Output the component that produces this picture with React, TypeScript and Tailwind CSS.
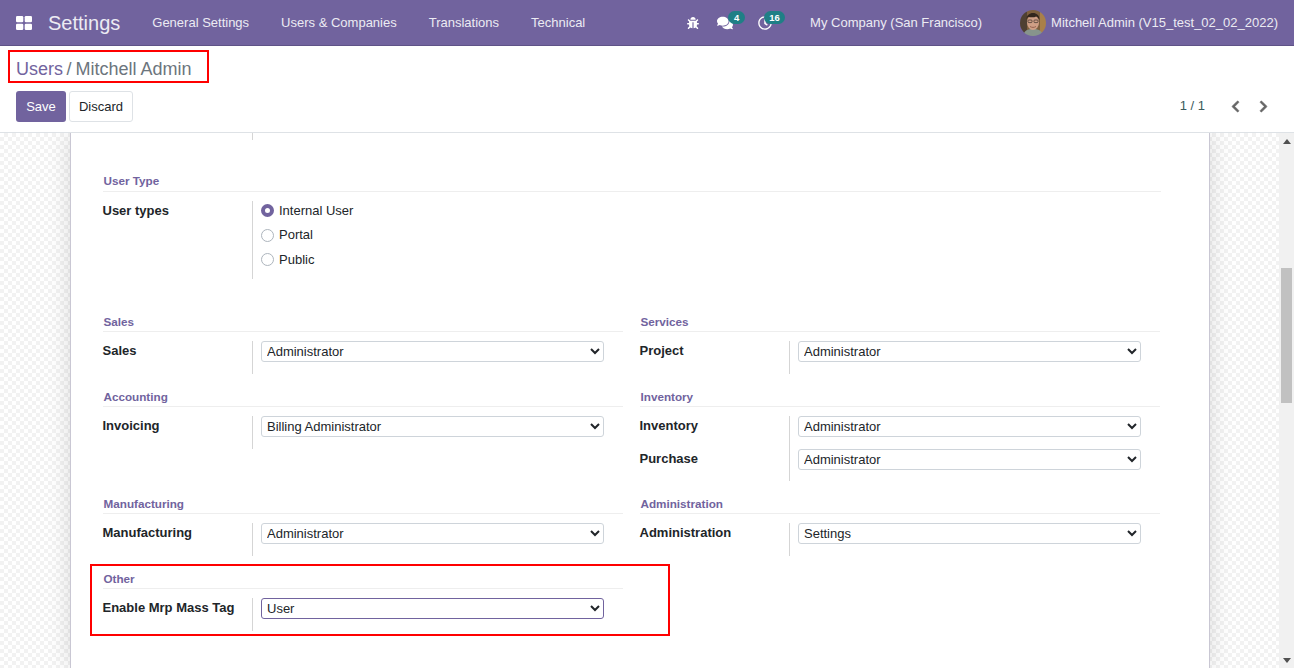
import React from "react";
import { FaBug, FaComments, FaRegClock, FaChevronLeft, FaChevronRight } from "react-icons/fa";

const font = "font-['Liberation_Sans',_Arial,_sans-serif]";

function Avatar() {
  return (
    <svg width="26" height="26" viewBox="0 0 26 26" className="rounded-full shrink-0 block">
      <defs>
        <filter id="soft">
          <feGaussianBlur stdDeviation="0.4" />
        </filter>
      </defs>
      <g filter="url(#soft)">
        <rect width="26" height="26" fill="#7d5f3e" />
        <rect x="0" y="0" width="7" height="26" fill="#4f3f30" />
        <rect x="20" y="0" width="6" height="26" fill="#a9804a" />
        <path d="M3 26c1-6 5-7 10-7s9 1 10 7z" fill="#87948c" />
        <ellipse cx="13" cy="12.500" rx="6" ry="7.500" fill="#cf9f86" />
        <path d="M6.500 10c0-5 3-7 6.500-7s6.500 2 6.500 7c-1-2-2-3-3-3.500-2 1-6 1-8 .5-1 .5-2 1.500-2 3z" fill="#33261f" />
        <rect x="8" y="10" width="4" height="2.600" rx="0.800" fill="none" stroke="#3a2f2a" strokeWidth="0.700" />
        <rect x="14" y="10" width="4" height="2.600" rx="0.800" fill="none" stroke="#3a2f2a" strokeWidth="0.700" />
        <path d="M10 16.500c2 1.200 4 1.200 6 0" fill="none" stroke="#8e5a4a" strokeWidth="0.900" />
      </g>
    </svg>
  );
}

function AppsIcon() {
  return (
    <svg width="16" height="14" viewBox="0 0 16 14" fill="#fff" className="shrink-0">
      <rect x="0" y="0" width="7.300" height="6.300" rx="1.300" />
      <rect x="8.700" y="0" width="7.300" height="6.300" rx="1.300" />
      <rect x="0" y="7.700" width="7.300" height="6.300" rx="1.300" />
      <rect x="8.700" y="7.700" width="7.300" height="6.300" rx="1.300" />
    </svg>
  );
}

function Navbar() {
  return (
    <div className="flex items-center h-[46px] shrink-0 bg-[#71639e] border-b border-[#5f5387] pl-4 pr-4 text-[13px] text-[#ecebf3]">
      <AppsIcon />
      <span className="ml-4 text-[20px] text-[#ecebf3]">Settings</span>
      <div className="flex ml-8 gap-8">
        <span>General Settings</span>
        <span>Users &amp; Companies</span>
        <span>Translations</span>
        <span>Technical</span>
      </div>
      <div className="flex items-center ml-auto">
        <FaBug size={12} className="block text-white" />
        <div className="relative ml-[18px]">
          <FaComments size={16} className="block text-white" />
          <span className="absolute left-[11px] -top-[4px] h-[13px] w-[17px] rounded-full bg-[#1f7f86] text-center text-[9.500px] leading-[13px] font-bold text-white">4</span>
        </div>
        <div className="relative ml-[25px]">
          <FaRegClock size={14} className="block text-white" />
          <span className="absolute left-[6px] -top-[5px] h-[13px] w-[21px] rounded-full bg-[#1f7f86] text-center text-[9.500px] leading-[13px] font-bold text-white">16</span>
        </div>
        <span className="ml-[38px]">My Company (San Francisco)</span>
        <span className="ml-[38px]"><Avatar /></span>
        <span className="ml-[5px]">Mitchell Admin (V15_test_02_02_2022)</span>
      </div>
    </div>
  );
}

function ControlPanel() {
  return (
    <div className="shrink-0 h-[87px] bg-white border-b border-[#dee2e6] px-4 pt-[11px]">
      <div className="flex items-baseline text-[18px] leading-[24px] h-[34px]">
        <span className="text-[#71639e]">Users</span>
        <span className="text-[#6c757d] ml-[3.500px] mr-[4px]">/</span>
        <span className="text-[#6c757d]">Mitchell Admin</span>
      </div>
      <div className="flex items-center text-[13px]">
        <button className="h-[31px] w-[50px] rounded-[3px] bg-[#71639e] text-white">Save</button>
        <button className="ml-[3px] h-[31px] w-[64px] rounded-[3px] border border-[#dee2e6] bg-white text-[#212529]">Discard</button>
        <span className="ml-auto -mt-[2px] text-[#3c5a5c]">1 / 1</span>
        <FaChevronLeft size={13} stroke="currentColor" strokeWidth={24} className="ml-[24px] -mt-px text-[#666666]" />
        <FaChevronRight size={13} stroke="currentColor" strokeWidth={24} className="ml-[15px] mr-[8px] -mt-px text-[#666666]" />
      </div>
    </div>
  );
}

function GroupTitle({ children, raised }: { children: React.ReactNode; raised?: boolean }) {
  return (
    <div
      className={
        raised
          ? "h-[20px] pl-[0.500px] border-b border-[#eeeeee] text-[11.700px] leading-[18px] font-bold text-[#71639e]"
          : "h-[20px] pl-[0.500px] border-b border-[#eeeeee] text-[11.700px] leading-[20px] font-bold text-[#71639e]"
      }
    >
      {children}
    </div>
  );
}

function FieldLabel({ children }: { children: React.ReactNode }) {
  return (
    <div className="w-[149.500px] -ml-[0.500px] shrink-0 text-[13px] leading-[19px] font-bold text-[#212529]">
      {children}
    </div>
  );
}

function SelectRow({ label, value, focused, short }: { label: string; value: string; focused?: boolean; short?: boolean }) {
  return (
    <div className={short ? "flex h-[32px]" : "flex h-[33px]"}>
      <FieldLabel>{label}</FieldLabel>
      <div className="border-l border-[#d5d5d5] pl-2">
        <select
          defaultValue={value}
          className={
            focused
              ? "block h-[21px] w-[343px] rounded-[3px] border border-[#71639e] bg-white pl-[1px] text-[13px] text-[#212529]"
              : "block h-[21px] w-[343px] rounded-[3px] border border-[#ced4da] bg-white pl-[1px] text-[13px] text-[#212529]"
          }
        >
          <option>{value}</option>
        </select>
      </div>
    </div>
  );
}

function Group({ title, raised, children }: { title: string; raised?: boolean; children: React.ReactNode }) {
  return (
    <div>
      <GroupTitle raised={raised}>{title}</GroupTitle>
      <div className="mt-[9px]">{children}</div>
    </div>
  );
}

function Radio({ label, checked }: { label: string; checked?: boolean }) {
  return (
    <div className="flex items-center h-[18px] text-[13px] text-[#212529]">
      {checked ? (
        <span className="w-[13px] h-[13px] rounded-full border-[4px] border-[#71639e] bg-white shrink-0" />
      ) : (
        <span className="w-[13px] h-[13px] rounded-full border border-[#adb5bd] bg-white shrink-0" />
      )}
      <span className="ml-[5px]">{label}</span>
    </div>
  );
}

function Sheet() {
  return (
    <div className="ml-[70px] w-[1140px] shrink-0 h-full bg-white border-x border-[#c9c7d3] shadow-[0_0_22px_rgba(0,0,0,0.14)] pl-[32px] pr-[48px]">
      <div className="ml-[149px] h-[7px] w-px bg-[#d5d5d5]" />
      <div className="mt-[32px]">
        <Group title="User Type" raised>
          <div className="flex h-[78px]">
            <FieldLabel>User types</FieldLabel>
            <div className="flex flex-col gap-[6.500px] border-l border-[#d5d5d5] pl-2 pt-[0.500px]">
              <Radio label="Internal User" checked />
              <Radio label="Portal" />
              <Radio label="Public" />
            </div>
          </div>
        </Group>
      </div>
      <div className="mt-[33px] grid grid-cols-[520px_520px] gap-x-[17px] gap-y-[13px]">
        <Group title="Sales">
          <SelectRow label="Sales" value="Administrator" />
        </Group>
        <Group title="Services">
          <SelectRow label="Project" value="Administrator" />
        </Group>
        <Group title="Accounting">
          <SelectRow label="Invoicing" value="Billing Administrator" />
        </Group>
        <Group title="Inventory">
          <SelectRow label="Inventory" value="Administrator" />
          <SelectRow label="Purchase" value="Administrator" short />
        </Group>
        <Group title="Manufacturing">
          <SelectRow label="Manufacturing" value="Administrator" />
        </Group>
        <Group title="Administration">
          <SelectRow label="Administration" value="Settings" />
        </Group>
        <Group title="Other">
          <SelectRow label="Enable Mrp Mass Tag" value="User" focused />
        </Group>
      </div>
    </div>
  );
}

function Scrollbar() {
  return (
    <div className="ml-auto w-[15px] shrink-0 h-full bg-[#f1f1f1] flex flex-col items-center">
      <svg width="8" height="5" viewBox="0 0 8 5" fill="#505050" className="mt-[6px]">
        <path d="M4 0l4 5H0z" />
      </svg>
      <div className="mt-[124px] h-[135px] w-[11px] bg-[#c1c1c1]" />
      <svg width="8" height="5" viewBox="0 0 8 5" fill="#505050" className="mt-auto mb-[5px]">
        <path d="M0 0h8L4 5z" />
      </svg>
    </div>
  );
}

export default function App() {
  return (
    <div className={`relative flex flex-col h-[668px] w-[1294px] overflow-hidden bg-white ${font}`}>
      <Navbar />
      <ControlPanel />
      <div className="flex flex-1 min-h-0 overflow-hidden bg-[repeating-conic-gradient(#f2f2f2_0_25%,#ffffff_0_50%)] bg-[length:8px_8px]">
        <Sheet />
        <Scrollbar />
      </div>
      {/* red annotation boxes from the screenshot */}
      <div className="absolute left-[8px] top-[50px] w-[201px] h-[33px] border-2 border-[#ff0000]" />
      <div className="absolute left-[90px] top-[564px] w-[580px] h-[72px] border-2 border-[#ff0000]" />
    </div>
  );
}
